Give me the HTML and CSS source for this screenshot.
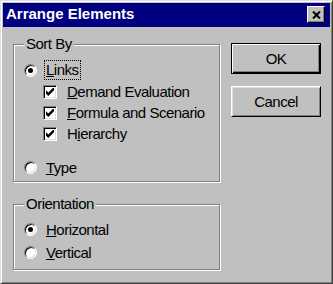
FILE: index.html
```html
<!DOCTYPE html>
<html lang="en">
<head>
  <meta charset="UTF-8">
  <title>Arrange Elements</title>
  <link rel="stylesheet" href="styles.css">
</head>
<body>

  <div class="dialog">
    <div class="titlebar">
      <span class="title">Arrange Elements</span>
      <button class="close-button">
        <svg width="9" height="8" viewBox="0 0 9 8"><path d="M1 0.5l7 7M8 0.5l-7 7" stroke="#000" stroke-width="2" fill="none"/></svg>
      </button>
    </div>

    <div class="content">
      <div class="groups">
        <div class="group sort-group">
          <div class="group-label"><span>Sort By</span></div>
          <div class="row radio-row links-row">
            <span class="radio checked"></span>
            <span class="text focus"><u>L</u>inks</span>
          </div>
          <div class="row check-row">
            <span class="check"><svg width="8" height="8" viewBox="0 0 7 7"><polygon points="0,2 2,4 6,0 7,0 7,2 2,7 0,5" fill="#000"/></svg></span>
            <span class="text"><u>D</u>emand Evaluation</span>
          </div>
          <div class="row check-row">
            <span class="check"><svg width="8" height="8" viewBox="0 0 7 7"><polygon points="0,2 2,4 6,0 7,0 7,2 2,7 0,5" fill="#000"/></svg></span>
            <span class="text"><u>F</u>ormula and Scenario</span>
          </div>
          <div class="row check-row">
            <span class="check"><svg width="8" height="8" viewBox="0 0 7 7"><polygon points="0,2 2,4 6,0 7,0 7,2 2,7 0,5" fill="#000"/></svg></span>
            <span class="text">H<u>i</u>erarchy</span>
          </div>
          <div class="row radio-row type-row">
            <span class="radio"></span>
            <span class="text"><u>T</u>ype</span>
          </div>
        </div>

        <div class="group orient-group">
          <div class="group-label"><span>Orientation</span></div>
          <div class="row radio-row tall-row">
            <span class="radio checked"></span>
            <span class="text"><u>H</u>orizontal</span>
          </div>
          <div class="row radio-row tall-row">
            <span class="radio"></span>
            <span class="text"><u>V</u>ertical</span>
          </div>
        </div>
      </div>

      <div class="buttons">
        <button class="btn default">OK</button>
        <button class="btn">Cancel</button>
      </div>
    </div>
  </div>

</body>
</html>
```

FILE: styles.css
```css
body {
  margin: 0;
  font-family: 'Liberation Sans', Arial, sans-serif;
  font-size: 15px;
  letter-spacing: -0.5px;
  color: #000;
  background: #c0c0c0;
}

.dialog {
  box-sizing: border-box;
  width: 333px;
  height: 284px;
  background: #c0c0c0;
  border: 1px solid;
  border-color: #dfdfdf #404040 #404040 #dfdfdf;
  box-shadow: inset 1px 1px #fff, inset -1px -1px #808080;
  padding: 2px;
}

.titlebar {
  height: 24px;
  background: #000080;
  display: flex;
  align-items: flex-start;
  justify-content: space-between;
  padding: 0 5px 0 3px;
}

.title {
  color: #fff;
  font-weight: bold;
  font-size: 15px;
  letter-spacing: 0;
  line-height: 17px;
  padding-top: 2px;
}

.close-button {
  box-sizing: border-box;
  width: 18px;
  height: 17px;
  margin-top: 3px;
  padding: 0;
  background: #c0c0c0;
  border: 1px solid;
  border-color: #fff #000 #000 #fff;
  box-shadow: inset -1px -1px #808080;
  display: flex;
  align-items: center;
  justify-content: center;
}

.content {
  display: flex;
  padding: 17px 9px 0 10px;
}

.groups {
  width: 207px;
}

.group {
  box-sizing: border-box;
  border: 1px solid #808080;
  box-shadow: inset 1px 1px #fff, 1px 1px #fff;
  padding-left: 10px;
}

.sort-group {
  padding-bottom: 3px;
}

.orient-group {
  margin-top: 22px;
  padding-bottom: 5px;
}

.group-label {
  height: 16px;
  margin-top: -9px;
  margin-bottom: 7px;
  line-height: 16px;
}

.group-label span {
  background: #c0c0c0;
  padding: 0 2px;
}

.orient-group .group-label {
  margin-bottom: 6px;
}

.row {
  display: flex;
  align-items: center;
  height: 21px;
}

.links-row {
  height: 22px;
}

.type-row {
  margin-top: 13px;
}

.tall-row {
  height: 23px;
}

.text {
  line-height: 16px;
  padding: 0 1px;
  white-space: nowrap;
}

.text.focus {
  outline: 1px dotted #000;
  outline-offset: 0;
  padding: 1px;
}

.radio {
  box-sizing: border-box;
  width: 13px;
  height: 13px;
  border-radius: 50%;
  background: #fff;
  border: 1px solid;
  border-color: #808080 #fff #fff #808080;
  box-shadow: inset 1px 1px #000, inset -1px -1px #dfdfdf;
  margin-right: 8px;
  display: flex;
  align-items: center;
  justify-content: center;
}

.radio.checked::after {
  content: '';
  width: 5px;
  height: 5px;
  border-radius: 50%;
  background: #000;
}

.check {
  box-sizing: border-box;
  width: 14px;
  height: 14px;
  margin-left: 19px;
  margin-right: 9px;
  background: #fff;
  border: 1px solid;
  border-color: #808080 #fff #fff #808080;
  box-shadow: inset 1px 1px #000, inset -1px -1px #dfdfdf;
  display: flex;
  align-items: center;
  justify-content: center;
}

.buttons {
  display: flex;
  flex-direction: column;
  gap: 12px;
  margin-left: 11px;
  margin-top: -1px;
}

.btn {
  box-sizing: border-box;
  width: 90px;
  height: 31px;
  padding: 0;
  font-family: inherit;
  font-size: 15px;
  letter-spacing: -0.5px;
  color: #000;
  background: #c0c0c0;
  border: 1px solid;
  border-color: #fff #000 #000 #fff;
  box-shadow: inset 1px 1px #dfdfdf, inset -1px -1px #808080;
}

.btn.default {
  border-color: #000;
  box-shadow: inset 1px 1px #fff, inset -1px -1px #000, inset -2px -2px #808080;
}
```
